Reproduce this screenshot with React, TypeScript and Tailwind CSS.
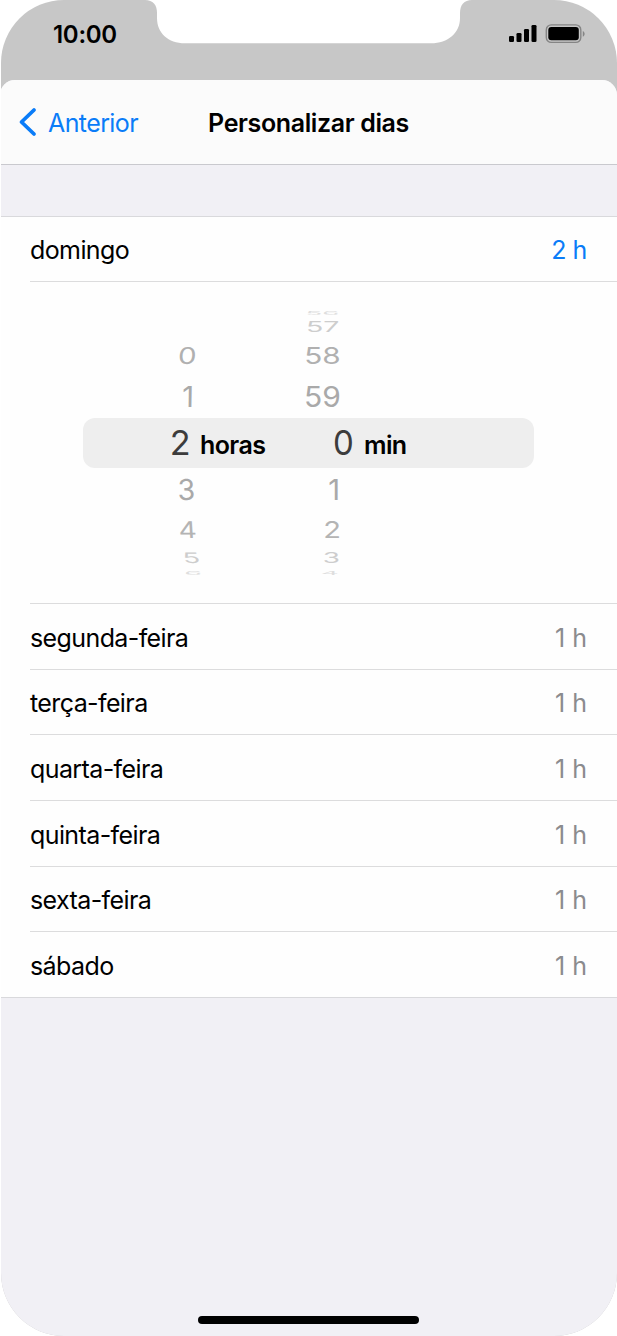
import React from "react";

type WheelItem = { label: string; row: string; glyph: string };

const hours: WheelItem[] = [
  { label: "", row: "h-[10px]", glyph: "" },
  { label: "", row: "h-[18px]", glyph: "" },
  { label: "0", row: "h-[40px]", glyph: "text-[#b0b0b0] translate-x-[7px] scale-x-[0.98] scale-y-[0.77] -skew-x-3" },
  { label: "1", row: "h-[41px]", glyph: "text-[#a9a9a9] translate-x-[8px] -translate-y-px scale-x-[0.97] scale-y-[0.96] -skew-x-1" },
  { label: "2", row: "h-[51px]", glyph: "text-[#3c3c3c] -translate-y-px scale-[1.14]" },
  { label: "3", row: "h-[44px]", glyph: "text-[#a9a9a9] translate-x-[6px] -translate-y-px scale-x-[0.95] scale-y-[0.96] skew-x-1" },
  { label: "4", row: "h-[36px]", glyph: "text-[#b4b4b4] translate-x-[8px] scale-x-[0.94] scale-y-[0.77] skew-x-3" },
  { label: "5", row: "h-[20px]", glyph: "text-[#cdcdcd] translate-x-[11px] scale-x-[0.94] scale-y-[0.48] skew-x-6" },
  { label: "6", row: "h-[10px]", glyph: "text-[#dedede] translate-x-[13px] scale-x-[0.96] scale-y-[0.16]" },
];

const minutes: WheelItem[] = [
  { label: "56", row: "h-[10px]", glyph: "text-[#dedede] -translate-x-[22px] scale-x-[0.92] scale-y-[0.16]" },
  { label: "57", row: "h-[18px]", glyph: "text-[#cdcdcd] -translate-x-[21px] scale-x-[0.95] scale-y-[0.48]" },
  { label: "58", row: "h-[40px]", glyph: "text-[#b0b0b0] -translate-x-[22px] scale-x-[0.99] scale-y-[0.77]" },
  { label: "59", row: "h-[41px]", glyph: "text-[#a9a9a9] -translate-x-[21.500px] -translate-y-px scale-x-[1] scale-y-[0.96]" },
  { label: "0", row: "h-[51px]", glyph: "text-[#3c3c3c] -translate-x-px -translate-y-px scale-x-[1.1] scale-y-[1.14]" },
  { label: "1", row: "h-[44px]", glyph: "text-[#a9a9a9] -translate-x-[10px] -translate-y-px scale-x-[0.97] scale-y-[0.96]" },
  { label: "2", row: "h-[36px]", glyph: "text-[#b4b4b4] -translate-x-[12px] scale-x-[0.97] scale-y-[0.77]" },
  { label: "3", row: "h-[20px]", glyph: "text-[#cdcdcd] -translate-x-[13px] scale-x-[0.93] scale-y-[0.48]" },
  { label: "4", row: "h-[10px]", glyph: "text-[#dedede] -translate-x-[14px] scale-x-[0.93] scale-y-[0.16]" },
];

const days = [
  { name: "segunda-feira", height: "h-[66px]" },
  { name: "terça-feira", height: "h-[65px]" },
  { name: "quarta-feira", height: "h-[66px]" },
  { name: "quinta-feira", height: "h-[66px]" },
  { name: "sexta-feira", height: "h-[65px]" },
  { name: "sábado", height: "h-[66px]" },
];

function Wheel({ items }: { items: WheelItem[] }) {
  return (
    <div className="flex w-[44px] flex-col text-[30px] leading-none">
      {items.map((item, i) => (
        <div key={i} className={`flex shrink-0 items-center justify-center ${item.row}`}>
          <span className={`block ${item.glyph}`}>{item.label}</span>
        </div>
      ))}
    </div>
  );
}

function StatusBar() {
  return (
    <div className="relative flex h-[80px] shrink-0 items-start justify-between pr-[31px] pl-[53px]">
      <svg className="absolute top-0 left-0" width="617" height="80" viewBox="0 0 617 80" fill="#fff">
        <path d="M145 0C153 0 157 5 157 13V18C157 33 168 43.300 185 43.300H431C448 43.300 460 33 460 18V13C460 5 464 0 472 0Z" />
      </svg>
      <span className="relative mt-[20px] text-[24px] leading-[30px] font-semibold tracking-[-0.3px]">10:00</span>
      <svg className="relative mt-[22px]" width="78" height="24" viewBox="0 0 78 24">
        <rect x="1" y="14" width="5" height="6" rx="1.300" />
        <rect x="8.500" y="11" width="5" height="9" rx="1.300" />
        <rect x="16" y="7" width="5" height="13" rx="1.300" />
        <rect x="23.500" y="3" width="5" height="17" rx="1.300" />
        <rect x="38.300" y="2.900" width="34.500" height="17.500" rx="5" fill="none" stroke="#858585" strokeWidth="1.400" />
        <rect x="40.300" y="5" width="30.500" height="13.300" rx="3" />
        <path d="M74.800 9C77.200 10 77.200 13.800 74.800 14.800Z" fill="#858585" />
      </svg>
    </div>
  );
}

export default function App() {
  return (
    <div className="h-[1336px] w-[617px] overflow-hidden bg-white pl-px font-['Inter','Liberation_Sans',sans-serif] text-[25px] text-black">
      <div className="flex h-full flex-col overflow-hidden rounded-[63px] bg-[#c7c7c7]">
        <div className="-ml-px flex w-[617px] flex-1 flex-col">
          <StatusBar />
          <div className="flex flex-1 flex-col overflow-hidden rounded-t-[15px] bg-[#f1f0f5]">
            <header className="grid h-[85px] shrink-0 grid-cols-[1fr_auto_1fr] items-center border-b border-[#c9c9ce] bg-[#fbfbfb]">
              <button className="flex items-center text-[#0a7cf8]">
                <svg className="ml-[18px]" width="20" height="30" viewBox="0 0 20 30" fill="none" stroke="currentColor" strokeWidth="3.800" strokeLinecap="round" strokeLinejoin="round">
                  <path d="M16 3L3.500 15L16 27" />
                </svg>
                <span className="ml-[10px] pt-[3px] tracking-[-0.6px]">Anterior</span>
              </button>
              <h1 className="pt-[3px] font-semibold tracking-[-0.38px]">Personalizar dias</h1>
            </header>

            <main className="mt-[51px] shrink-0 border-t border-[#d9d9dc] bg-[#fefefe]">
              <div className="ml-[30px] flex h-[65px] items-center justify-between border-b border-[#dcdcdd] pt-[3px] pr-[30px]">
                <span className="tracking-[-0.6px]">domingo</span>
                <span className="tracking-[-0.4px] text-[#0a7cf8]">2 h</span>
              </div>

              <div className="relative h-[321px] pt-[26px]">
                <div className="absolute top-[136px] left-[83px] h-[50px] w-[451px] rounded-[12px] bg-[#eee]" />
                <div className="relative flex pl-[158px]">
                  <Wheel items={hours} />
                  <span className="mt-[121px] -ml-[2px] w-[122px] leading-[32px] font-semibold tracking-[-0.6px]">horas</span>
                  <Wheel items={minutes} />
                  <span className="mt-[121px] -ml-[2px] leading-[32px] font-semibold tracking-[-0.6px]">min</span>
                </div>
              </div>

              <div className="border-b border-[#d9d9dc]">
                {days.map((day) => (
                  <div key={day.name} className={`ml-[30px] flex items-center justify-between border-t border-[#dcdcdd] pt-[4px] pr-[30px] ${day.height}`}>
                    <span className="tracking-[-0.6px]">{day.name}</span>
                    <span className="text-[#8b8b8e]">1 h</span>
                  </div>
                ))}
              </div>
            </main>

            <div className="mt-auto mb-[12px] h-[8px] w-[221px] self-center rounded-full bg-black" />
          </div>
        </div>
      </div>
    </div>
  );
}
